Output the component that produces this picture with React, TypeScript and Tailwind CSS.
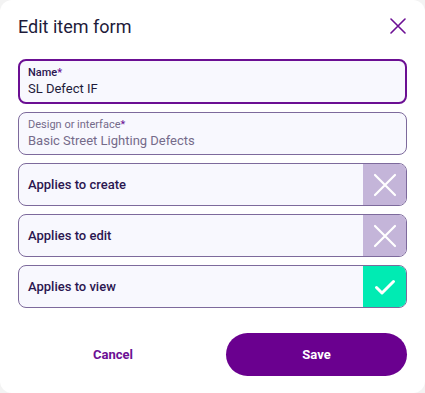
import React, { useState } from 'react';

type ToggleRowProps = {
  label: string;
  checked: boolean;
  onToggle: () => void;
};

const ToggleRow: React.FC<ToggleRowProps> = ({ label, checked, onToggle }) => (
  <div className="flex h-[43px] items-stretch overflow-hidden rounded-[8px] border border-[#7d6a9c] bg-[#f8f8fe]">
    <div className="flex flex-1 items-center pl-[9px] text-[13px] font-medium text-[#2b1650]">{label}</div>
    <button
      onClick={onToggle}
      className={
        checked
          ? 'flex w-[43px] items-center justify-center bg-[#00ebb3]'
          : 'flex w-[43px] items-center justify-center bg-[#c4b5d9]'
      }
    >
      {checked ? (
        <svg width="24" height="24" viewBox="0 0 24 24" fill="none" stroke="white" strokeWidth="3" strokeLinecap="round" strokeLinejoin="round">
          <path d="M3.5 12.5l5.5 5.5L20.5 6.5" />
        </svg>
      ) : (
        <svg width="24" height="24" viewBox="0 0 24 24" fill="none" stroke="white" strokeWidth="2.2" strokeLinecap="round">
          <path d="M2 2l20 20M22 2L2 22" />
        </svg>
      )}
    </button>
  </div>
);

export default function App() {
  const [flags, setFlags] = useState({ create: false, edit: false, view: true });

  return (
    <div className="h-[393px] w-[425px] bg-[#f3f3f3]" style={{ fontFamily: 'Roboto, "Noto Sans", sans-serif' }}>
      <div className="flex h-full flex-col rounded-[12px] bg-white px-[18px]">
        {/* header */}
        <div className="flex h-[50px] items-center justify-between pt-[2px]">
          <h1 className="text-[18px] font-normal text-[#1e1b3a]">Edit item form</h1>
          <button className="mr-[1px] text-[#6c0f94]">
            <svg width="16" height="16" viewBox="0 0 16 16" fill="none" stroke="currentColor" strokeWidth="1.6" strokeLinecap="round">
              <path d="M1 1l14 14M15 1L1 15" />
            </svg>
          </button>
        </div>

        <div className="mt-[9px] flex flex-col gap-[8px]">
          <div className="flex h-[45px] flex-col justify-center rounded-[8px] border-2 border-[#6b0f93] bg-[#f8f8fe] px-[8px]">
            <div className="text-[11px] font-medium leading-[14px] text-[#2b1650]">
              Name<span className="text-[#6b0f93]">*</span>
            </div>
            <div className="text-[13px] leading-[18px] text-[#1e1b3a]">SL Defect IF</div>
          </div>

          <div className="flex h-[43px] flex-col justify-center rounded-[8px] border border-[#7d6a9c] bg-[#f8f8fe] px-[9px]">
            <div className="text-[11px] leading-[14px] text-[#756b8a]">
              Design or interface<span className="text-[#6b0f93]">*</span>
            </div>
            <div className="text-[13px] leading-[18px] text-[#756b8a]">Basic Street Lighting Defects</div>
          </div>

          <ToggleRow label="Applies to create" checked={flags.create} onToggle={() => setFlags({ ...flags, create: !flags.create })} />
          <ToggleRow label="Applies to edit" checked={flags.edit} onToggle={() => setFlags({ ...flags, edit: !flags.edit })} />
          <ToggleRow label="Applies to view" checked={flags.view} onToggle={() => setFlags({ ...flags, view: !flags.view })} />
        </div>

        {/* footer */}
        <div className="mt-[25px] flex items-center">
          <button className="flex h-[43px] flex-1 items-center justify-center text-[13px] font-bold text-[#6c0f94]">Cancel</button>
          <button className="ml-[18px] flex h-[43px] w-[181px] items-center justify-center rounded-full bg-[#6a008f] text-[13px] font-bold text-white">
            Save
          </button>
        </div>
      </div>
    </div>
  );
}
